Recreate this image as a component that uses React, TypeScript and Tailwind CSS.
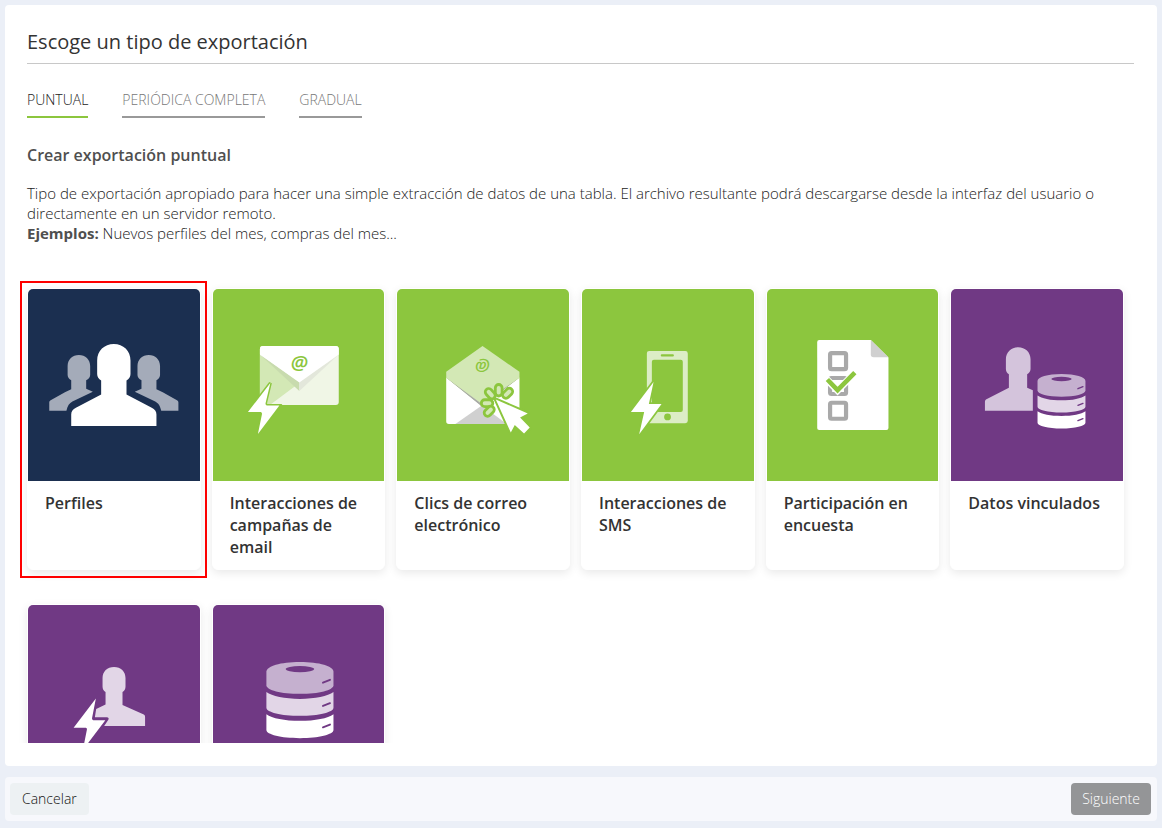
import { useState } from "react";
import type { ReactNode } from "react";
import clsx from "clsx";

const TABS = ["Puntual", "Periódica completa", "Gradual"];

// Cylinder with three slices, 48x55 at scale 1
function Database({ transform }: { transform: string }) {
  return (
    <g transform={transform}>
      <path
        d="M0 7C0 3 10 0 24 0s24 3 24 7v9.500c0 3.500-10.500 6.200-24 6.200S0 20 0 16.500z"
        fill="#c5b0cf"
      />
      <ellipse cx="24" cy="5" rx="10.200" ry="2.200" fill="#703984" />
      <path
        d="M0 21.500c4 3 13 4.900 24 4.900s20-1.900 24-4.900v11.200c0 3.200-10.500 5.800-24 5.800S0 35.900 0 32.700z"
        fill="#e2d6e7"
      />
      <path
        d="M0 37.300c4 3 13 4.700 24 4.700s20-1.700 24-4.700v11.400c0 3.200-10.500 5.800-24 5.800S0 51.900 0 48.700z"
        fill="#fff"
      />
      <path
        d="M40.500 14.700l5-2M40.500 31.400l5-2M40.500 46.700l5-2"
        stroke="#703984"
        strokeWidth="1.400"
        strokeLinecap="round"
      />
    </g>
  );
}

function ProfilesIcon() {
  const side =
    "M51 66c6.500 0 11.300 4.500 11.300 11V86c0 2.200-1.500 4-4 5.300v8.400L65 102.700 44.500 112.500c-3 1.700-5 4.200-6 9.200H21.300V113.500c0-1 .4-1.600 1.400-2.200L37 103.200l6.300-2.900v-9c-2.200-1.300-3.600-3-3.600-5.300V77c0-6.500 4.800-11 11.300-11z";
  return (
    <>
      <g fill="#a4abb9">
        <path d={side} />
        <path d={side} transform="matrix(-1 0 0 1 172 0)" />
      </g>
      <path
        fill="#fff"
        d="M86 55c9.500 0 16.700 6.800 16.700 16.500V85c0 3-1.500 5-4 6.500V105.500L124 118.800c3 1.600 4.700 3.200 4.700 6.700V137H43.300V125.500c0-3.500 1.700-5.100 4.700-6.700L73.300 105.500V91.500c-2.500-1.500-4-3.500-4-6.500V71.500C69.300 61.800 76.500 55 86 55z"
      />
    </>
  );
}

function EmailCampaignIcon() {
  return (
    <>
      <rect x="47" y="57" width="79" height="59" rx="3" fill="#f0f6e6" />
      <path d="M47 66l39.500 28L57 116h-7a3 3 0 0 1-3-3z" fill="#d3e8b5" />
      <path d="M47 65.500L86.500 102V93z" fill="#c8dbae" />
      <path d="M126 65.500L86.500 102V93z" fill="#e3e7db" />
      <path d="M50 57h73a3 3 0 0 1 3 3v5.500L86.500 93.500 47 65.500V60a3 3 0 0 1 3-3z" fill="#fff" />
      <text
        x="86.500"
        y="80.500"
        textAnchor="middle"
        fontFamily="Open Sans"
        fontSize="20"
        fontWeight="600"
        fontStyle="italic"
        fill="#8cc63e"
      >
        @
      </text>
      <path
        d="M57.500 94L35 123h12c1.700 0 2.300.8 2 2.500l-4 19.500 21.500-28.500H55c-2 0-2.600-.8-2.300-2.500z"
        fill="#fff"
        stroke="#8cc63e"
        strokeWidth="3"
        paintOrder="stroke"
      />
    </>
  );
}

function EmailClickIcon() {
  return (
    <>
      <path d="M49.300 88.500L85 117l37.700-28.500V135H52a2.700 2.700 0 0 1-2.700-2.700z" fill="#fff" />
      <path d="M85 116.500L58.500 135H110z" fill="#d0d0d0" />
      <path d="M49.300 88.500L85 117.500l37.700-29-37.700 22z" fill="#a9a9a9" />
      <path d="M85.700 57l37 25.700v6L85 115 49.300 88.700v-6z" fill="#d3e8b5" />
      {/* the open flap shows its sign upside down */}
      <text
        x="86"
        y="82.500"
        textAnchor="middle"
        fontFamily="Open Sans"
        fontSize="17"
        fontWeight="600"
        fontStyle="italic"
        fill="#8cc63e"
        transform="rotate(180 86 76.500)"
      >
        @
      </text>
      <g fill="#d3e8b5" stroke="#8cc63e" strokeWidth="2.800">
        <rect x="98.500" y="95.500" width="6.800" height="11.500" rx="3.400" />
        <rect x="98.500" y="94.500" width="6.800" height="11.500" rx="3.400" transform="rotate(45 101.500 113)" />
        <rect x="97.500" y="96" width="6.800" height="11.500" rx="3.400" transform="rotate(-42 101 113)" />
        <rect x="84.500" y="110.800" width="11.500" height="6.800" rx="3.400" />
        <rect x="86.500" y="118.700" width="11.500" height="6.800" rx="3.400" transform="rotate(-45 92.500 122)" />
      </g>
      <path
        d="M99 110.500l32 14-7.700 4 9.700 10.200-5.700 6L118 136l-4 7.500z"
        fill="#fff"
        stroke="#8cc63e"
        strokeWidth="4"
        strokeLinejoin="round"
        paintOrder="stroke"
      />
    </>
  );
}

function SmsIcon() {
  return (
    <>
      <path
        fillRule="evenodd"
        d="M67.500 62h36a2.500 2.500 0 0 1 2.500 2.500v67.300a2.500 2.500 0 0 1-2.500 2.500h-36a2.500 2.500 0 0 1-2.500-2.500V64.500a2.500 2.500 0 0 1 2.500-2.500zM72 70.700a2 2 0 0 0-2 2V121a2 2 0 0 0 2 2h27a2 2 0 0 0 2-2V72.700a2 2 0 0 0-2-2z"
        fill="#dcedc6"
      />
      <path d="M80 66.400h11" stroke="#8cc63e" strokeWidth="2.200" strokeLinecap="round" />
      <circle cx="85.700" cy="128" r="3.400" fill="#8cc63e" />
      <path
        d="M71.700 93L49 123h13.300l-5 22.300L79.700 115H67z"
        fill="#fff"
        stroke="#8cc63e"
        strokeWidth="3.500"
        paintOrder="stroke"
      />
    </>
  );
}

function SurveyIcon() {
  return (
    <>
      <path d="M52.300 51H104l17.700 17.500V139a2 2 0 0 1-2 2H52.300a2 2 0 0 1-2-2V53a2 2 0 0 1 2-2z" fill="#fff" />
      <path d="M104 51v14.500c0 2 1 2.700 2.700 2.700h15z" fill="#d0d0d0" />
      <g fill="none" stroke="#a9a9a9" strokeWidth="4.200">
        <rect x="63.200" y="64.100" width="16" height="16" rx="1.500" />
        <rect x="63.200" y="89" width="16" height="16" rx="1.500" />
        <rect x="63.200" y="113.800" width="16" height="16" rx="1.500" />
      </g>
      <path d="M59.500 90l11.200 11.500L89 83" fill="none" stroke="#fff" strokeWidth="7" />
      <path d="M60.500 90.500l10.200 10.700L88 83.500" fill="none" stroke="#8cc63e" strokeWidth="4.600" />
    </>
  );
}

function LinkedDataIcon() {
  return (
    <>
      <path
        fill="#d4c4dc"
        d="M67.300 58.300c7 0 12.400 5 12.400 12V80c0 2.300-1.400 4-3.400 5.300V98.700l5.700 2.500v20.500H34V113c0-1.500.5-2.200 2-3L58 98.700V85.300c-2-1.300-3-3-3-5.300V70.300c0-7 5.300-12 12.300-12z"
      />
      <Database transform="translate(86.700 85)" />
    </>
  );
}

function ProfileEventIcon() {
  return (
    <>
      <path
        fill="#e2d6e7"
        d="M86.200 62c6.800 0 11.500 4.500 11.500 11v8.500c0 2.500-1 4.200-3 5.500V100l20.800 9.300c1.300.7 1.800 1.300 1.800 2.700v9H76.300l4.200-6.300c.8-1.500.2-2.400-1.500-2.400H67l1.300-8.300 9.400-4.500V87c-2-1.300-3-3-3-5.500V73c0-6.500 4.700-11 11.500-11z"
      />
      <path
        d="M68 93.500L45.700 122.700H57c1.600 0 2.200.6 2 2L55 145 77.500 115.300H66.500c-1.800 0-2.500-.7-2.300-2.300z"
        fill="#fff"
      />
    </>
  );
}

interface ExportType {
  label: string;
  color: string;
  icon: ReactNode;
}

const EXPORT_TYPES: ExportType[] = [
  { label: "Perfiles", color: "bg-[#1b2f50]", icon: <ProfilesIcon /> },
  { label: "Interacciones de campañas de email", color: "bg-[#8cc63e]", icon: <EmailCampaignIcon /> },
  { label: "Clics de correo electrónico", color: "bg-[#8cc63e]", icon: <EmailClickIcon /> },
  { label: "Interacciones de SMS", color: "bg-[#8cc63e]", icon: <SmsIcon /> },
  { label: "Participación en encuesta", color: "bg-[#8cc63e]", icon: <SurveyIcon /> },
  { label: "Datos vinculados", color: "bg-[#703984]", icon: <LinkedDataIcon /> },
  { label: "", color: "bg-[#703984]", icon: <ProfileEventIcon /> },
  { label: "", color: "bg-[#703984]", icon: <Database transform="translate(53.500 57) scale(1.400)" /> },
];

function ExportCard({
  type,
  selected,
  onSelect,
}: {
  type: ExportType;
  selected: boolean;
  onSelect: () => void;
}) {
  return (
    <button
      type="button"
      onClick={onSelect}
      className="relative flex flex-col rounded-md border border-white bg-white text-left shadow-[0_3px_10px_rgba(0,0,0,0.09)]"
    >
      <span className={clsx("block w-full rounded-t-[5px]", type.color)}>
        <svg viewBox="0 0 172 192" className="block h-48 w-full" aria-hidden="true">
          {type.icon}
        </svg>
      </span>
      <span className="block px-[17px] py-[11px] text-base leading-[22px] font-semibold text-[#333]">
        {type.label}
      </span>
      {selected && (
        <span className="absolute -top-2 -right-[7px] -bottom-[9px] -left-2 border-2 border-[#fe0000]" />
      )}
    </button>
  );
}

export default function App() {
  const [tab, setTab] = useState(0);
  const [selected, setSelected] = useState(0);

  return (
    <div className="flex h-screen flex-col gap-[11px] bg-[#ebeff7] px-[5px] pt-[5px] pb-[7px] font-['Open_Sans',sans-serif] text-[#4f4f4f]">
      <main className="flex min-h-0 flex-1 flex-col rounded bg-white pt-[23px] pr-[23px] pb-[23px] pl-[22px]">
        <h1 className="border-b border-[#c8c8c8] pb-[7px] text-xl leading-7 font-normal text-[#333]">
          Escoge un tipo de exportación
        </h1>

        <nav className="mt-[26px] flex gap-[34px] text-sm leading-5 font-light">
          {TABS.map((name, i) => (
            <button
              key={name}
              type="button"
              onClick={() => setTab(i)}
              className={clsx(
                "border-b-2 pb-[6px] uppercase",
                i === tab ? "border-[#8cc63e] text-[#222]" : "border-[#999] text-[#777]"
              )}
            >
              {name}
            </button>
          ))}
        </nav>

        <h2 className="mt-[25px] text-base leading-6 font-semibold">Crear exportación puntual</h2>
        <p className="mt-4 text-[15px] leading-5 font-light text-[#222]">
          Tipo de exportación apropiado para hacer una simple extracción de datos de una tabla. El
          archivo resultante podrá descargarse desde la interfaz del usuario o directamente en un
          servidor remoto.
          <br />
          <strong className="font-bold text-[#4f4f4f]">Ejemplos:</strong> Nuevos perfiles del mes,
          compras del mes...
        </p>

        {/* negative margin leaves room for the selection frame */}
        <div className="-mx-2 min-h-0 flex-1 overflow-y-auto pt-[45px] pr-[18px] pl-2 [scrollbar-width:none]">
          <div className="grid auto-rows-fr grid-cols-6 gap-x-[11px] gap-y-[34px]">
            {EXPORT_TYPES.map((type, i) => (
              <ExportCard
                key={i}
                type={type}
                selected={i === selected}
                onSelect={() => setSelected(i)}
              />
            ))}
          </div>
        </div>
      </main>

      <footer className="flex justify-between rounded bg-[#f7f8fc] py-[6px] pr-[6px] pl-[5px] text-sm leading-5 font-light">
        <button type="button" className="rounded bg-[#edf1f3] px-3 py-[6px] text-[#111]">
          Cancelar
        </button>
        <button type="button" className="rounded bg-[#949597] px-[11px] py-[6px] text-white">
          Siguiente
        </button>
      </footer>
    </div>
  );
}
